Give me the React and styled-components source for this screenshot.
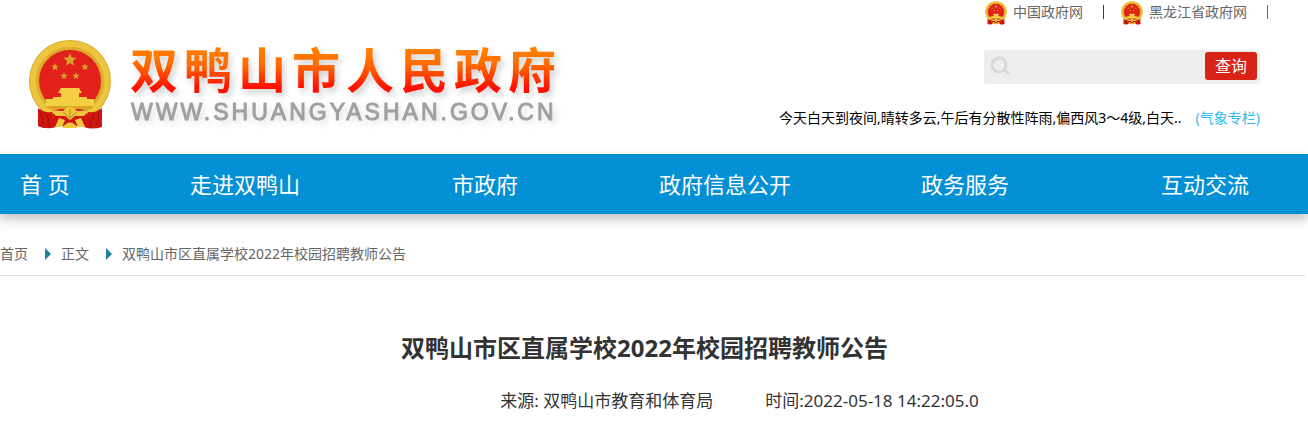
import React from 'react';
import styled, { createGlobalStyle } from 'styled-components';

const GlobalStyle = createGlobalStyle`
  * {
    box-sizing: border-box;
  }
  body {
    margin: 0;
    background: #fff;
    color: #333;
    font-family: "Noto Sans", "Noto Sans CJK SC", sans-serif;
    font-size: 14px;
    overflow-x: hidden;
  }
  ul, ol, h1, p {
    margin: 0;
    padding: 0;
    list-style: none;
  }
  a {
    color: inherit;
    text-decoration: none;
  }
`;

const Header = styled.header`
  display: flex;
  justify-content: space-between;
  align-items: flex-start;
  height: 154px;
  padding: 0 40px 0 28px;
`;

const Logo = styled.a`
  display: flex;
  align-items: flex-start;
  gap: 18px;
  padding-top: 40px;
`;

const LogoText = styled.div`
  display: flex;
  flex-direction: column;
`;

const SiteName = styled.div`
  display: flex;
  gap: 6px;
  height: 56px;
  font: 700 48px/54px "Noto Sans CJK SC", sans-serif;
  color: transparent;
  background: linear-gradient(#ff8400 10%, #ff6a00 45%, #ff1000 85%);
  background-clip: text;
  -webkit-background-clip: text;
  filter: drop-shadow(3px 4px 3px rgba(0, 0, 0, 0.18));
`;

const SiteUrl = styled.div`
  font: 23px/32px "Liberation Sans", Arial, sans-serif;
  letter-spacing: 3px;
  color: #a0a0a0;
  -webkit-text-stroke: 1px #a0a0a0;
  padding-left: 1px;
  filter: drop-shadow(3px 3px 3px rgba(0, 0, 0, 0.12));
`;

const Side = styled.div`
  display: flex;
  flex-direction: column;
  align-items: flex-end;
`;

const TopLinks = styled.ul`
  display: flex;
  height: 50px;
`;

const TopLink = styled.li`
  display: flex;
  align-items: flex-start;
  line-height: 24px;
  color: #666;

  a {
    display: flex;
    gap: 6px;
  }
  &::after {
    content: "";
    width: 1px;
    height: 14px;
    margin: 5px 0 0 20px;
    background: ${props => props.$line};
  }
  & + & {
    margin-left: 17px;
  }
`;

const SearchForm = styled.form`
  display: flex;
  align-items: center;
  width: 276px;
  height: 34px;
  margin-right: 8px;
  padding: 0 3px 2px 6px;
  border-radius: 3px;
  background: #eee;
`;

const SearchInput = styled.input`
  flex: 1;
  min-width: 0;
  height: 28px;
  padding: 0 6px;
  border: 0;
  outline: 0;
  background: transparent;
  font: inherit;
`;

const SearchButton = styled.button`
  width: 52px;
  height: 28px;
  padding: 0;
  border: 0;
  border-radius: 3px;
  background: #d92316;
  color: #fff;
  font: 16px/28px "Noto Sans", "Noto Sans CJK SC", sans-serif;
`;

const Weather = styled.p`
  display: flex;
  gap: 14px;
  margin: 22px 8px 0 0;
  line-height: 24px;
  color: #000;

  a {
    color: #2ebcf0;
  }
`;

const Nav = styled.nav`
  background: #0390d4;
  box-shadow: 0 5px 10px rgba(0, 0, 0, 0.25);
`;

const NavList = styled.ul`
  display: grid;
  grid-template-columns: 125px repeat(5, minmax(240px, 1fr));
  overflow: hidden;
`;

const NavItem = styled.li`
  color: #fff;
  font-size: 22px;
  line-height: 60px;
  text-align: center;

  &:first-child {
    padding-left: 20px;
    text-align: left;
  }
`;

const Breadcrumb = styled.ol`
  display: flex;
  margin-right: 3px;
  padding: 28px 0 9px;
  border-bottom: 1px solid #ddd;
  line-height: 24px;
  color: #666;
`;

const Crumb = styled.li`
  display: flex;
  align-items: center;

  & + &::before {
    content: "";
    margin: 0 10px 0 17px;
    border: 6px solid transparent;
    border-left-color: #1f7f9c;
    border-right: 0;
  }
`;

const Article = styled.main`
  padding: 54px 19px 0 0;
`;

const Title = styled.h1`
  font-size: 24px;
  line-height: 36px;
  font-weight: 700;
  text-align: center;
`;

const Meta = styled.div`
  display: flex;
  justify-content: center;
  gap: 52px;
  padding: 22px 0 8px 190px;
  font-size: 17px;
  line-height: 26px;
`;

const starPoints = (cx, cy, r) =>
  Array.from({ length: 10 }, (_, i) => {
    const radius = i % 2 ? r * 0.42 : r;
    const a = (Math.PI / 5) * i - Math.PI / 2;
    return `${cx + radius * Math.cos(a)},${cy + radius * Math.sin(a)}`;
  }).join(' ');

const stars = [[42, 20, 7], [27, 27, 4], [57, 27, 4], [36, 36, 4], [48, 36, 4]];

const Emblem = ({ width, height }) => (
  <svg width={width} height={height} viewBox="0 0 84 90" aria-hidden="true">
    <path d="M12 69 Q42 78 72 69 L74 87 Q64 90 56 87 L42 84 L28 87 Q19 90 10 86Z" fill="#cf1712" />
    <circle cx="42" cy="41" r="41" fill="#dca826" />
    <circle cx="42" cy="41" r="37" fill="none" stroke="#edc53e" strokeWidth="6" />
    <circle cx="42" cy="41" r="33" fill="none" stroke="#dfad2d" strokeWidth="2" />
    <circle cx="42" cy="41" r="31" fill="#e3211b" />
    {stars.map(([x, y, r]) => (
      <polygon key={x} points={starPoints(x, y, r)} fill="#d6a52f" />
    ))}
    <path d="M33 48H51L54 53H30ZM33 53H51V57H33ZM25 57H59V59H66V66H18V59H25Z" fill="#f5cf43" />
    <path d="M18 66H66L63 69H21Z" fill="#d7a51f" />
    <path d="M10 68Q15 73 24 72L28 86Q19 90 10 86Z" fill="#ce1510" />
    <path d="M74 68Q69 73 60 72L56 86Q65 90 74 86Z" fill="#ce1510" />
    <path d="M13 72L15 85M19 74L22 87M71 72L69 85M65 74L62 87" stroke="#a70e0b" fill="none" />
    <path d="M24 70H60L57 86H27Z" fill="#ce1510" />
    <path d="M22 70L35 71Q42 63 49 71L62 70L56 76H47L42 80L37 76H28Z" fill="#efc53b" />
    <path d="M35 72L42 78L49 72M42 69V78" stroke="#be8817" fill="none" />
    <path d="M31 78L37 80L34 87H27ZM53 78L47 80L50 87H57ZM34 88Q42 77 50 88Z" fill="#f2c83c" />
  </svg>
);

const SearchIcon = () => (
  <svg width="20" height="20" viewBox="0 0 20 20" fill="none" stroke="#d8d8d8" aria-hidden="true">
    <circle cx="9" cy="9" r="7" strokeWidth="3" />
    <path d="M14 14L19 18" strokeWidth="3" />
  </svg>
);

const siteName = '双鸭山市人民政府';
const articleTitle = '双鸭山市区直属学校2022年校园招聘教师公告';
const navItems = ['首 页', '走进双鸭山', '市政府', '政府信息公开', '政务服务', '互动交流'];
const topLinks = [
  { name: '中国政府网', line: '#3d3a55' },
  { name: '黑龙江省政府网', line: '#a85a10' },
];

export default function App() {
  return <>
    <GlobalStyle />
    <Header>
      <Logo href="#" aria-label={siteName}>
        <Emblem width={84} height={90} />
        <LogoText>
          <SiteName>
            {siteName.split('').map(char => <span key={char}>{char}</span>)}
          </SiteName>
          <SiteUrl>WWW.SHUANGYASHAN.GOV.CN</SiteUrl>
        </LogoText>
      </Logo>
      <Side>
        <TopLinks>
          {topLinks.map(link => (
            <TopLink key={link.name} $line={link.line}>
              <a href="#"><Emblem width={22} height={26} />{link.name}</a>
            </TopLink>
          ))}
        </TopLinks>
        <SearchForm onSubmit={e => e.preventDefault()}>
          <SearchIcon />
          <SearchInput type="text" aria-label="查询" />
          <SearchButton type="submit">查询</SearchButton>
        </SearchForm>
        <Weather>
          <span>今天白天到夜间,晴转多云,午后有分散性阵雨,偏西风3～4级,白天..</span>
          <a href="#">(气象专栏)</a>
        </Weather>
      </Side>
    </Header>
    <Nav>
      <NavList>
        {navItems.map(item => (
          <NavItem key={item}><a href="#">{item}</a></NavItem>
        ))}
      </NavList>
    </Nav>
    <Breadcrumb>
      <Crumb><a href="#">首页</a></Crumb>
      <Crumb><a href="#">正文</a></Crumb>
      <Crumb>{articleTitle}</Crumb>
    </Breadcrumb>
    <Article>
      <Title>{articleTitle}</Title>
      <Meta>
        <span>来源: 双鸭山市教育和体育局</span>
        <span>时间:2022-05-18 14:22:05.0</span>
      </Meta>
    </Article>
  </>;
}
